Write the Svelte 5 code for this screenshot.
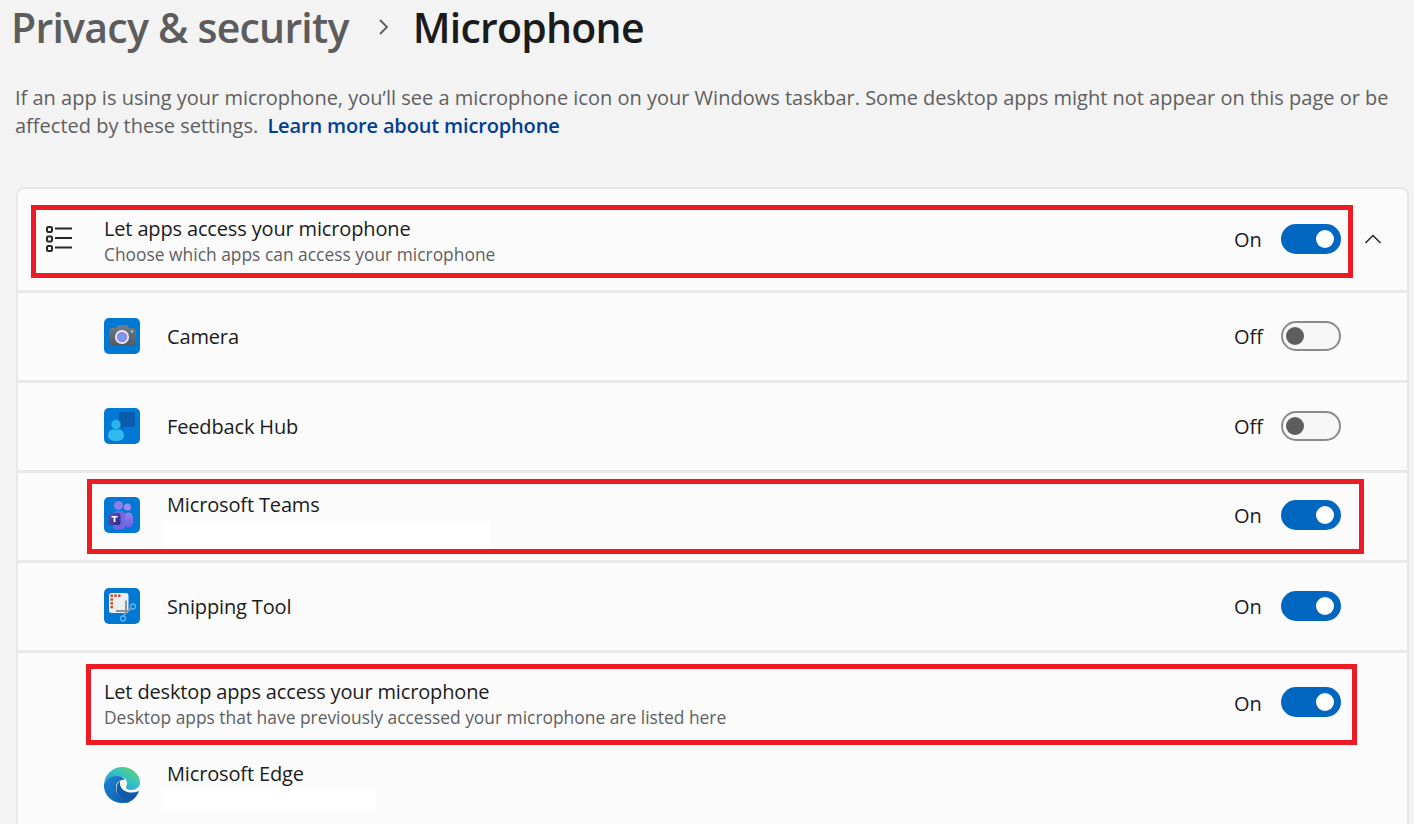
<script>
	const apps = [
		{ name: 'Camera', icon: 'camera', on: false },
		{ name: 'Feedback Hub', icon: 'feedback', on: false },
		{ name: 'Microsoft Teams', icon: 'teams', on: true, redact: 328, mark: true },
		{ name: 'Snipping Tool', icon: 'snip', on: true }
	];
</script>

{#snippet toggle(on)}
	<div class="state">
		<span class="state-label">{on ? 'On' : 'Off'}</span>
		<span class="switch" class:on><span class="knob"></span></span>
	</div>
{/snippet}

{#snippet appIcon(kind)}
	<svg class="app-icon" width="36" height="36" viewBox="0 0 36 36" aria-hidden="true">
		<defs>
			<radialGradient id="lens"><stop offset="0" stop-color="#4fb2ee" /><stop offset="1" stop-color="#a77be6" /></radialGradient>
			<linearGradient id="camBody" x1="0" y1="0" x2="0" y2="1"><stop offset="0" stop-color="#6f7d88" /><stop offset="1" stop-color="#4f5a64" /></linearGradient>
			<linearGradient id="teamsBack" x1="0" y1="0" x2="0" y2="1"><stop offset="0" stop-color="#8f86f0" /><stop offset="1" stop-color="#6a5fe0" /></linearGradient>
			<linearGradient id="teamsT" x1="0" y1="0" x2="1" y2="1"><stop offset="0" stop-color="#5a55c4" /><stop offset="1" stop-color="#30287f" /></linearGradient>
			<linearGradient id="edgeTop" x1="0" y1="1" x2="1" y2="0"><stop offset="0" stop-color="#1a8fd0" /><stop offset=".55" stop-color="#35c1c4" /><stop offset="1" stop-color="#6fd85c" /></linearGradient>
			<linearGradient id="edgeLow" x1="0" y1="0" x2="1" y2="1"><stop offset="0" stop-color="#1b86d2" /><stop offset="1" stop-color="#0c5aa8" /></linearGradient>
		</defs>
		{#if kind === 'edge'}
			<path d="M0 17C1 7 9 0 18 0c10 0 18 7 18 16 0 4-4 7-9 7-3 0-5-1-5-2.500 0-1 1-2 1-4 0-5-4-7-9-7C7 10 2 12 0 17z" fill="url(#edgeTop)" />
			<path d="M0 17c2-5 7-8 13-8 4 0 7 1.800 8 4-5-1-9 3-9 8 0 6 5 12 12 14l1 .2c-2 .6-5 .8-7 .8C8 36-1 28 0 17z" fill="url(#edgeLow)" />
			<path d="M12.500 22c0-3 1-6 3.500-8-.5 4 1 8 5 10 4 2 9 2 14 0-2 6-7 10-11 11.500C17 33 12.500 28 12.500 22z" fill="#0f5ba8" />
		{:else}
			<rect width="36" height="36" rx="5" fill="#0078d4" />
			{#if kind === 'camera'}
				<path d="M5 13a3 3 0 0 1 3-3h4l2-3h9l2 3h4a3 3 0 0 1 3 3v12a3 3 0 0 1-3 3H8a3 3 0 0 1-3-3z" fill="url(#camBody)" />
				<circle cx="18" cy="19" r="7" fill="#eef2f8" />
				<circle cx="18" cy="19" r="5.300" fill="url(#lens)" />
				<circle cx="28" cy="13.500" r="1.200" fill="#b8c0c8" />
			{:else if kind === 'feedback'}
				<path d="M15 6a2 2 0 0 1 2-2h12a2 2 0 0 1 2 2v11a2 2 0 0 1-2 2H20l-3 3v-3a2 2 0 0 1-2-2z" fill="#0b5cad" />
				<circle cx="12" cy="16.500" r="4.700" fill="#2bb4ea" />
				<path d="M4 28c0-4 2-6.500 5-6.500h6c3 0 5 2.500 5 6.500 0 3-4 5-8 5s-8-2-8-5z" fill="#30baf0" />
			{:else if kind === 'teams'}
				<circle cx="14.500" cy="8.500" r="4.600" fill="#8b7fe8" />
				<circle cx="23.500" cy="10" r="3.600" fill="#9a8cf0" />
				<rect x="20" y="15.500" width="9" height="15" rx="4.500" fill="url(#teamsBack)" />
				<rect x="9" y="14" width="12" height="18.500" rx="3.500" fill="#6f66e0" />
				<rect x="4.500" y="16" width="12" height="12" rx="2" fill="url(#teamsT)" />
				<path d="M7.500 19h6v1.600h-2.100V25h-1.800v-4.400H7.500z" fill="#fff" />
			{:else if kind === 'snip'}
				<rect x="5" y="5" width="19.500" height="20" rx="2.500" fill="#eceff2" />
				<g fill="#d83b1f">
					<rect x="6.500" y="6.500" width="2.400" height="2.400" /><rect x="10.300" y="6.500" width="2.400" height="2.400" /><rect x="14.100" y="6.500" width="2.400" height="2.400" />
					<rect x="6.500" y="10.300" width="2.400" height="2.400" /><rect x="6.500" y="14.100" width="2.400" height="2.400" /><rect x="6.500" y="17.900" width="2.400" height="2.400" />
				</g>
				<path d="M12 23h12l3.500-3M22 12.500V24l-2.500 4" fill="none" stroke="#8d959c" stroke-width="2" />
				<circle cx="29" cy="18.500" r="2.500" fill="none" stroke="#58b8f0" stroke-width="1.300" />
				<circle cx="19" cy="30.500" r="2.500" fill="none" stroke="#58b8f0" stroke-width="1.300" />
			{/if}
		{/if}
	</svg>
{/snippet}

<main class="page">
	<header class="crumbs">
		<span class="parent">Privacy &amp; security</span>
		<svg class="crumb-sep" width="12" height="18" viewBox="0 0 12 18" aria-hidden="true">
			<path d="M2 2l7 7-7 7" fill="none" stroke="#5c5c5c" stroke-width="1.800" />
		</svg>
		<h1>Microphone</h1>
	</header>

	<p class="intro">
		If an app is using your microphone, you’ll see a microphone icon on your Windows taskbar. Some desktop apps might not appear on this page or be affected by these settings. <a href="#learn">Learn more about microphone</a>
	</p>

	<section class="card">
		<div class="row row-head">
			<svg class="list-icon" width="28" height="28" viewBox="0 0 28 28" aria-hidden="true">
				<g fill="none" stroke="#262626" stroke-width="2">
					<rect x="1" y="1" width="5" height="5" rx="1.200" />
					<rect x="1" y="10.500" width="5" height="5" rx="1.200" />
					<rect x="1" y="20" width="5" height="5" rx="1.200" />
					<path d="M9 2.500h17M9 12h17M9 21.500h17" />
				</g>
			</svg>
			<div class="text">
				<div class="title">Let apps access your microphone</div>
				<div class="sub">Choose which apps can access your microphone</div>
			</div>
			{@render toggle(true)}
			<svg class="chevron" width="18" height="10" viewBox="0 0 18 10" aria-hidden="true">
				<path d="M1.500 9L9 1.500 16.500 9" fill="none" stroke="#262626" stroke-width="1.500" />
			</svg>
			<span class="mark mark-head"></span>
		</div>

		{#each apps as app}
			<div class="row row-app" class:row-marked={app.mark}>
				{@render appIcon(app.icon)}
				<div class="text">
					<div class="title">{app.name}</div>
					{#if app.redact}
						<div class="redact" style="width: {app.redact}px"></div>
					{/if}
				</div>
				{@render toggle(app.on)}
				{#if app.mark}<span class="mark mark-teams"></span>{/if}
			</div>
		{/each}

		<div class="row row-desktop">
			<div class="text">
				<div class="title">Let desktop apps access your microphone</div>
				<div class="sub">Desktop apps that have previously accessed your microphone are listed here</div>
			</div>
			{@render toggle(true)}
			<span class="mark mark-desktop"></span>
		</div>

		<div class="row row-edge">
			{@render appIcon('edge')}
			<div class="text">
				<div class="title">Microsoft Edge</div>
				<div class="redact redact-short" style="width: 213px"></div>
			</div>
		</div>
	</section>
</main>

<style>
	:global(body) {
		background: #f3f3f3;
		overflow: hidden;
	}

	.page {
		height: 824px;
		overflow: hidden;
		padding: 0 5px 0 16px;
		box-sizing: border-box;
		font-family: 'Open Sans', 'Noto Sans', sans-serif;
		color: #1b1b1b;
	}

	.crumbs {
		display: flex;
		align-items: center;
		box-sizing: border-box;
		height: 58px;
		padding-bottom: 4px;
		margin-left: -5px;
		font-size: 41px;
		font-weight: 600;
		letter-spacing: -0.75px;
	}

	.parent {
		color: #5c5c5c;
	}

	.crumb-sep {
		margin: 0 23px 0 29px;
	}

	h1 {
		margin: 0;
		font: inherit;
		color: #1b1b1b;
	}

	.intro {
		margin: 26px 0 0 -1px;
		width: 1385px;
		font-size: 20px;
		line-height: 28px;
		color: #5f5f5f;
	}

	.intro a {
		margin-left: 4px;
		color: #003e92;
		font-weight: 600;
		letter-spacing: -0.15px;
		text-decoration: none;
	}

	.card {
		margin-top: 47px;
		height: 700px;
		background: #fbfbfb;
		border: 2px solid #e8e8e8;
		border-bottom: 0;
		border-radius: 8px 8px 0 0;
		box-sizing: border-box;
	}

	.row {
		position: relative;
		display: flex;
		align-items: center;
		box-sizing: border-box;
		padding-right: 66px;
		border-bottom: 3px solid #e8e8e8;
	}

	.row-head {
		height: 104px;
		padding-left: 28px;
	}

	.row-app {
		height: 90px;
		padding-left: 86px;
	}

	.row-marked {
		padding-bottom: 2px;
	}

	.row-desktop {
		height: 92px;
		padding-top: 8px;
		padding-left: 86px;
		border-bottom: 0;
	}

	.row-edge {
		height: 80px;
		padding-left: 86px;
		border-bottom: 0;
		align-items: flex-start;
		padding-top: 15px;
	}

	.list-icon {
		flex: none;
		margin-right: 30px;
	}

	.app-icon {
		flex: none;
		margin: -2px 27px 0 0;
	}

	.row-edge .app-icon {
		margin-top: 7px;
	}

	.text {
		flex: 1;
		min-width: 0;
	}

	.title {
		font-size: 20px;
		line-height: 27px;
		letter-spacing: -0.15px;
		color: #1b1b1b;
	}

	.sub {
		padding-top: 1px;
		font-size: 17.400px;
		line-height: 22px;
		color: #5f5f5f;
	}

	.redact {
		height: 28px;
		margin: 3px 0 -8px -4px;
		background: #fff;
	}

	.redact-short {
		height: 21px;
		margin: 2px 0 0 -4px;
	}

	.state {
		display: flex;
		align-items: center;
		flex: none;
	}

	.state-label {
		width: 47px;
		font-size: 20px;
		color: #1b1b1b;
	}

	.switch {
		display: flex;
		align-items: center;
		justify-content: flex-start;
		box-sizing: border-box;
		width: 60px;
		height: 30px;
		margin-top: -2px;
		padding: 0 5px 0 3px;
		border: 2px solid #8a8a8a;
		border-radius: 15px;
		background: #f6f6f6;
	}

	.switch.on {
		justify-content: flex-end;
		border-color: #0067c0;
		background: #0067c0;
	}

	.knob {
		width: 18px;
		height: 18px;
		border-radius: 50%;
		background: #5d5d5d;
	}

	.on .knob {
		background: #fff;
	}

	.chevron {
		position: absolute;
		right: 25px;
		top: 45px;
	}

	.mark {
		position: absolute;
		box-sizing: border-box;
		border: 5px solid #ed1c24;
		pointer-events: none;
	}

	.mark-head {
		left: 13px;
		top: 16px;
		width: 1322px;
		height: 73px;
	}

	.mark-teams {
		left: 69px;
		top: 6px;
		width: 1277px;
		height: 75px;
	}

	.mark-desktop {
		left: 68px;
		top: 11px;
		width: 1271px;
		height: 81px;
	}
</style>
